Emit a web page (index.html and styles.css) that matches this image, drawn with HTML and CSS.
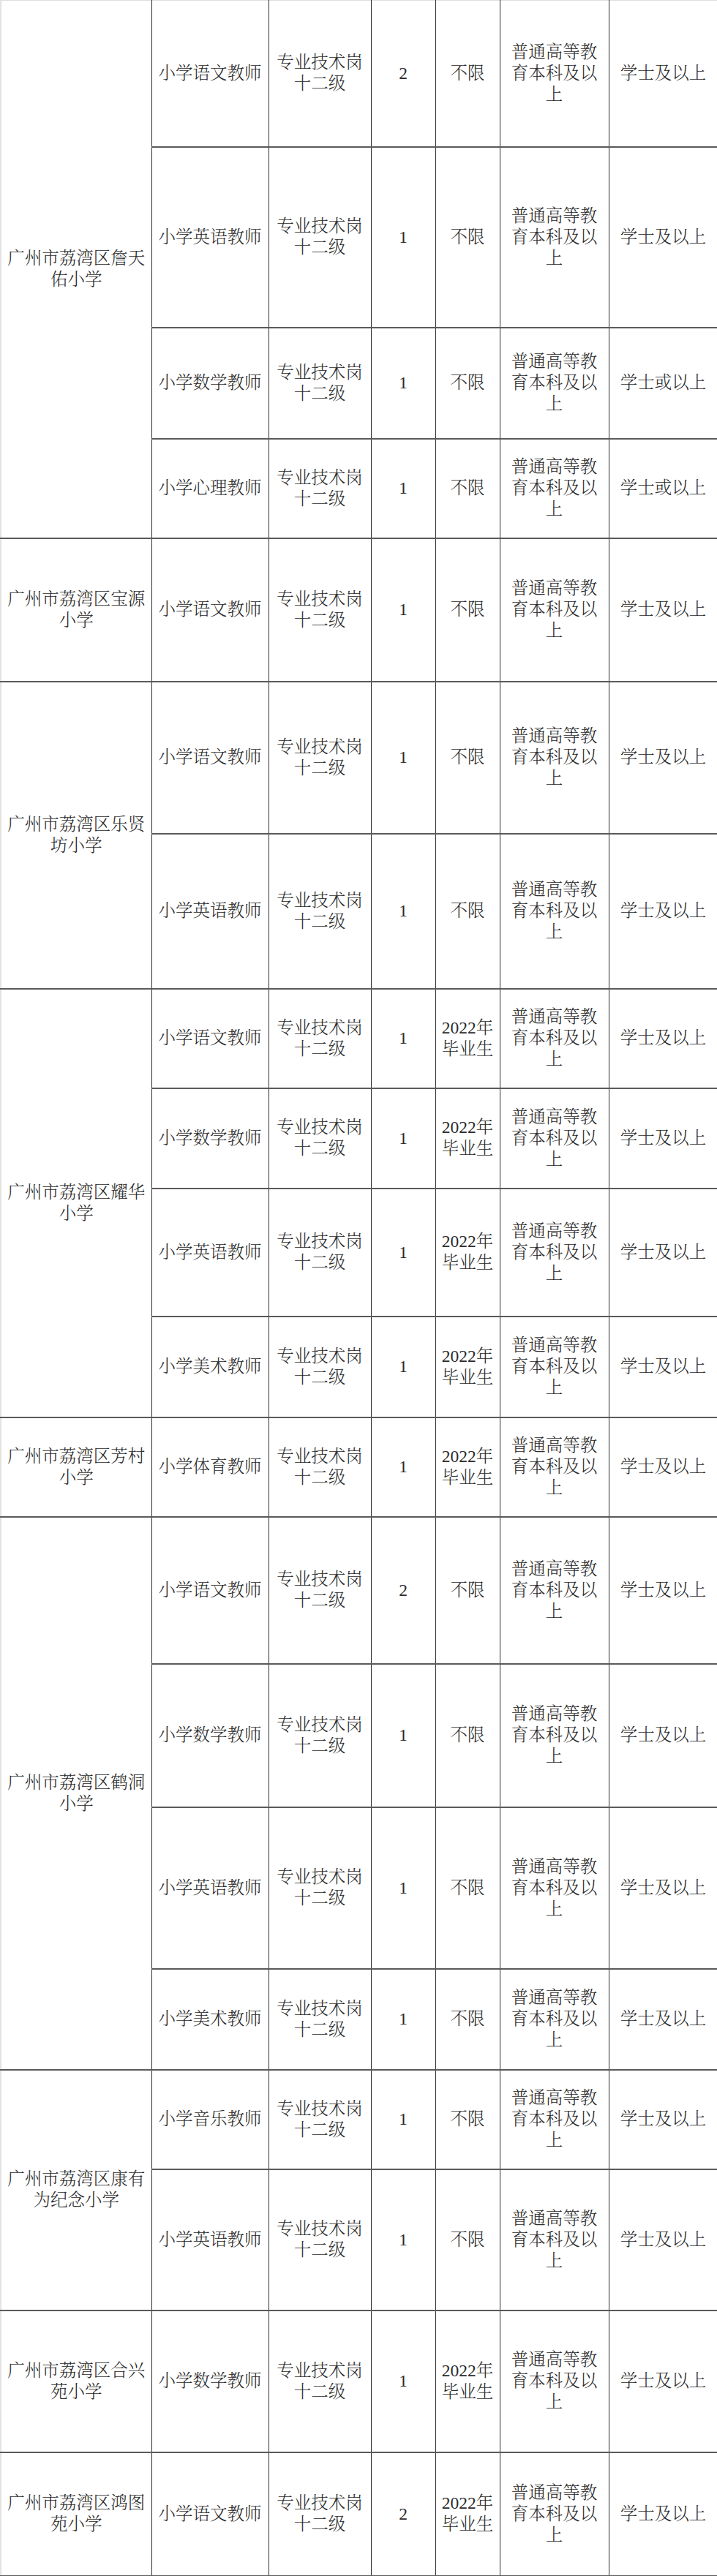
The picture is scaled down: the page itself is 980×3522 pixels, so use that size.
FILE: index.html
```html
<!DOCTYPE html>
<html lang="zh-CN">
<head>
<meta charset="utf-8">
<title>岗位表</title>
<link rel="stylesheet" href="styles.css">
</head>
<body>
<table class="jobs">
  <colgroup>
    <col class="c-school"><col class="c-post"><col class="c-level"><col class="c-num"><col class="c-grad"><col class="c-edu"><col class="c-deg">
  </colgroup>
  <tbody>
    <tr class="h200 first"><td class="school" rowspan="4">广州市荔湾区詹天佑小学</td><td>小学语文教师</td><td>专业技术岗十二级</td><td class="num">2</td><td>不限</td><td>普通高等教育本科及以上</td><td>学士及以上</td></tr>
    <tr class="h247"><td>小学英语教师</td><td>专业技术岗十二级</td><td class="num">1</td><td>不限</td><td>普通高等教育本科及以上</td><td>学士及以上</td></tr>
    <tr class="h152"><td>小学数学教师</td><td>专业技术岗十二级</td><td class="num">1</td><td>不限</td><td>普通高等教育本科及以上</td><td>学士或以上</td></tr>
    <tr class="h136"><td>小学心理教师</td><td>专业技术岗十二级</td><td class="num">1</td><td>不限</td><td>普通高等教育本科及以上</td><td>学士或以上</td></tr>

    <tr class="h196"><td class="school">广州市荔湾区宝源小学</td><td>小学语文教师</td><td>专业技术岗十二级</td><td class="num">1</td><td>不限</td><td>普通高等教育本科及以上</td><td>学士及以上</td></tr>

    <tr class="h208"><td class="school" rowspan="2">广州市荔湾区乐贤坊小学</td><td>小学语文教师</td><td>专业技术岗十二级</td><td class="num">1</td><td>不限</td><td>普通高等教育本科及以上</td><td>学士及以上</td></tr>
    <tr class="h212"><td>小学英语教师</td><td>专业技术岗十二级</td><td class="num">1</td><td>不限</td><td>普通高等教育本科及以上</td><td>学士及以上</td></tr>

    <tr class="h136"><td class="school" rowspan="4">广州市荔湾区耀华小学</td><td>小学语文教师</td><td>专业技术岗十二级</td><td class="num">1</td><td>2022年毕业生</td><td>普通高等教育本科及以上</td><td>学士及以上</td></tr>
    <tr class="h137"><td>小学数学教师</td><td>专业技术岗十二级</td><td class="num">1</td><td>2022年毕业生</td><td>普通高等教育本科及以上</td><td>学士及以上</td></tr>
    <tr class="h175"><td>小学英语教师</td><td>专业技术岗十二级</td><td class="num">1</td><td>2022年毕业生</td><td>普通高等教育本科及以上</td><td>学士及以上</td></tr>
    <tr class="h138"><td>小学美术教师</td><td>专业技术岗十二级</td><td class="num">1</td><td>2022年毕业生</td><td>普通高等教育本科及以上</td><td>学士及以上</td></tr>

    <tr class="h136"><td class="school">广州市荔湾区芳村小学</td><td>小学体育教师</td><td>专业技术岗十二级</td><td class="num">1</td><td>2022年毕业生</td><td>普通高等教育本科及以上</td><td>学士及以上</td></tr>

    <tr class="h201"><td class="school" rowspan="4">广州市荔湾区鹤洞小学</td><td>小学语文教师</td><td>专业技术岗十二级</td><td class="num">2</td><td>不限</td><td>普通高等教育本科及以上</td><td>学士及以上</td></tr>
    <tr class="h196"><td>小学数学教师</td><td>专业技术岗十二级</td><td class="num">1</td><td>不限</td><td>普通高等教育本科及以上</td><td>学士及以上</td></tr>
    <tr class="h221"><td>小学英语教师</td><td>专业技术岗十二级</td><td class="num">1</td><td>不限</td><td>普通高等教育本科及以上</td><td>学士及以上</td></tr>
    <tr class="h138"><td>小学美术教师</td><td>专业技术岗十二级</td><td class="num">1</td><td>不限</td><td>普通高等教育本科及以上</td><td>学士及以上</td></tr>

    <tr class="h136"><td class="school" rowspan="2">广州市荔湾区康有为纪念小学</td><td>小学音乐教师</td><td>专业技术岗十二级</td><td class="num">1</td><td>不限</td><td>普通高等教育本科及以上</td><td>学士及以上</td></tr>
    <tr class="h193"><td>小学英语教师</td><td>专业技术岗十二级</td><td class="num">1</td><td>不限</td><td>普通高等教育本科及以上</td><td>学士及以上</td></tr>

    <tr class="h194"><td class="school">广州市荔湾区合兴苑小学</td><td>小学数学教师</td><td>专业技术岗十二级</td><td class="num">1</td><td>2022年毕业生</td><td>普通高等教育本科及以上</td><td>学士及以上</td></tr>

    <tr class="h169"><td class="school">广州市荔湾区鸿图苑小学</td><td>小学语文教师</td><td>专业技术岗十二级</td><td class="num">2</td><td>2022年毕业生</td><td>普通高等教育本科及以上</td><td>学士及以上</td></tr>
  </tbody>
</table>
</body>
</html>
```

FILE: styles.css
```css
html, body {
  margin: 0;
  padding: 0;
  background: #ffffff;
}

.jobs {
  border-collapse: collapse;
  table-layout: fixed;
  width: 980px;
  font-family: "Liberation Serif", "Noto Serif CJK SC", "Noto Sans CJK SC", serif;
  font-size: 23.5px;
  line-height: 29px;
  font-weight: 300;
  color: #2b2b2b;
}

.c-school { width: 206px; }
.c-post { width: 160px; }
.c-level { width: 140px; }
.c-num { width: 88px; }
.c-grad { width: 88px; }
.c-edu { width: 149px; }
.c-deg { width: 149px; }

.jobs td {
  padding: 0 6px;
  text-align: center;
  vertical-align: middle;
  border-left: 1px solid #2e2e2e;
  border-right: 1px solid #2e2e2e;
  border-bottom: 2px solid #5a5a5a;
  border-top: 2px solid #5a5a5a;
}

.jobs td.school {
  border-left: 2px solid #e2e2e2;
}

.jobs tr.first td {
  border-top: 1px solid #dedede;
}

.jobs td:last-child {
  border-right: 1px solid #1e1e1e;
}

.jobs tr:last-child td,
.jobs td.school:last-of-type {
  border-bottom: 2px solid #5a5a5a;
}

.h136 { height: 136px; }
.h137 { height: 137px; }
.h138 { height: 138px; }
.h152 { height: 152px; }
.h169 { height: 169px; }
.h175 { height: 175px; }
.h193 { height: 193px; }
.h194 { height: 194px; }
.h196 { height: 196px; }
.h200 { height: 200px; }
.h201 { height: 201px; }
.h208 { height: 208px; }
.h212 { height: 212px; }
.h221 { height: 221px; }
.h247 { height: 247px; }
```
